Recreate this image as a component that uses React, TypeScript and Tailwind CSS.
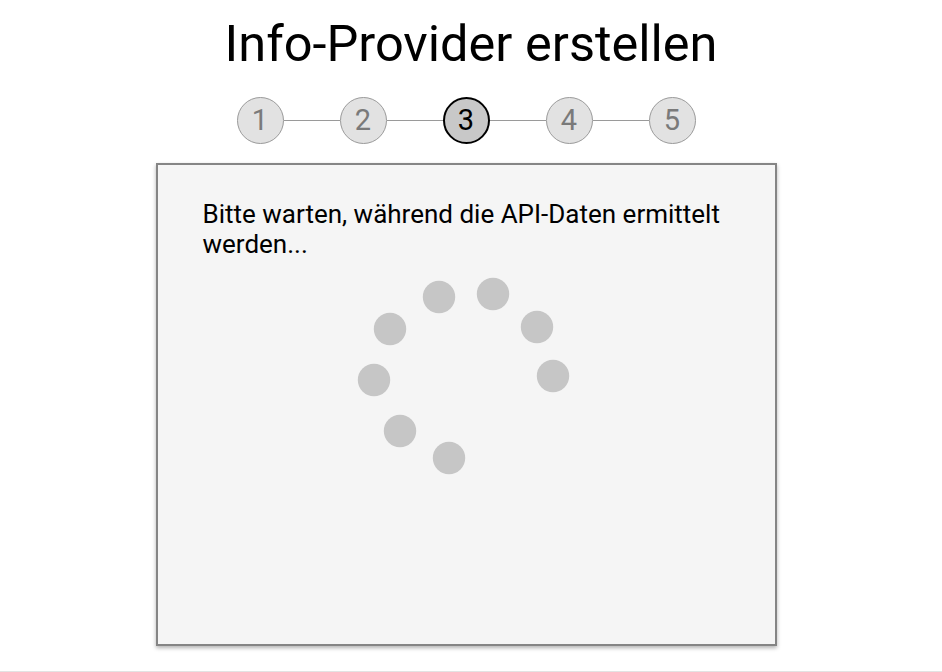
import React from 'react';

const steps = [1, 2, 3, 4, 5];
const activeStep = 3;

// spinner dot centres, relative to the 230x210 drawing
const dots = [
  [88, 27],
  [142, 24],
  [186, 57],
  [202, 106],
  [98, 188],
  [49, 161],
  [23, 110],
  [39, 59],
];

function Stepper() {
  return (
    <div className="flex items-center justify-center">
      {steps.map((n, i) => {
        const active = n === activeStep;
        return (
          <React.Fragment key={n}>
            {i > 0 && <div className="h-px w-[56px] bg-[#9a9a9a]" />}
            <div
              className={
                active
                  ? 'flex h-[47px] w-[47px] items-center justify-center rounded-full border-2 border-black bg-[#c8c8c8] text-[29px] text-black'
                  : 'flex h-[47px] w-[47px] items-center justify-center rounded-full border border-[#9a9a9a] bg-[#e2e2e2] text-[29px] text-[#7a7a7a]'
              }
            >
              {n}
            </div>
          </React.Fragment>
        );
      })}
    </div>
  );
}

function Spinner() {
  return (
    <svg width="230" height="210" viewBox="0 0 230 210" className="mx-auto mt-[11px] block">
      {dots.map(([cx, cy], i) => (
        <circle key={i} cx={cx} cy={cy} r="16.2" fill="#c6c6c6" />
      ))}
    </svg>
  );
}

export default function App() {
  return (
    <div
      className="flex h-[672px] flex-col border-b border-[#e3e3e3] bg-white"
      style={{ fontFamily: 'Roboto, "Noto Sans", sans-serif' }}
    >
      <h1 className="mt-[18px] text-center text-[50.5px] leading-[51px] font-normal text-black">
        Info-Provider erstellen
      </h1>
      <div className="mx-auto mt-[28px] w-[621px] -translate-x-[5px]">
        <Stepper />
        <div className="mt-[19px] h-[483px] border-2 border-[#858585] bg-[#f5f5f5] px-[45px] pt-[34px] shadow-[0_2px_4px_rgba(0,0,0,0.3)]">
          <p className="text-[26px] leading-[30px] text-black">
            Bitte warten, während die API-Daten ermittelt werden...
          </p>
          <Spinner />
        </div>
      </div>
    </div>
  );
}
